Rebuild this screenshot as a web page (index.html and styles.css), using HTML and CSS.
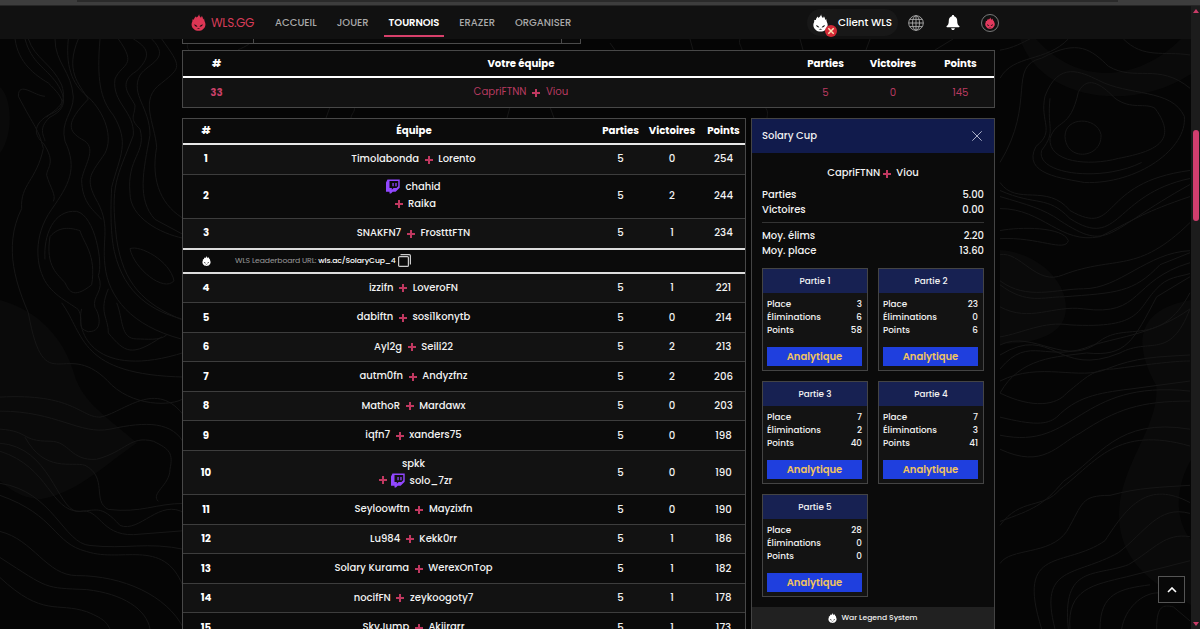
FILE: index.html
```
<!DOCTYPE html>
<html lang="fr">
<head>
    <meta charset="UTF-8">
    <meta name="viewport" content="width=device-width, initial-scale=1.0">
    <title>WLS.GG - Solary Cup</title>
    <link rel="stylesheet" href="styles.css">
</head>
<body>
    <svg width="0" height="0" class="sprite">
        <symbol id="wls" viewBox="0 0 24 28">
            <path fill-rule="evenodd" d="M13 0c0 2.500 1.200 4.200 3 6 .8-.8 1.200-1.800 1.400-3 1.500 2 2 4 2.100 6 .7-.4 1.200-1 1.600-1.800.4 2 .4 3.600 1.100 5.100C24.600 17 23.500 22 19.300 25.200 16.500 28.600 7.500 28.600 4.700 25.200.5 22-.6 17 1.800 12.300c.3-1.300.3-2.200 0-3.600.9.500 1.800.6 2.700.3C5 6.700 6 5 8 3.500c0 1 .1 1.700.6 2.400C10.500 4.600 12.300 2.800 13 0zM5 17c.2 2.700 2 4.200 5.200 4C9.500 19 7.500 17.700 5 17zm14 0c-2.500.7-4.500 2-5.200 4 3.200.2 5-1.300 5.200-4zM9 23.800l3 1 3-1-3-.5z"/>
        </symbol>
        <symbol id="twitch" viewBox="0 0 24 24">
            <path fill-rule="evenodd" d="M2.500 0h21v14l-7 7h-5l-3 3H6v-3H0V5zM6 2.500v12h4v3l3-3h5l3-3v-9zM11 6h2.200v5.500H11zm5 0h2.200v5.500H16z"/>
        </symbol>
    </svg>

    <svg class="topo" viewBox="0 0 1200 629">
        <g class="shade">
            <path d="M0 300c30 8 60 30 73 70 8 30 25 40 64 73-30 20-60 50-95 56-20 0-32-10-42-18z"/>
            <path d="M0 87c12 10 14 48 0 66z"/>
            <path d="M1000 250c34 2 66 28 66 58 0 26-30 36-66 36z"/>
            <path d="M1020 39c20 60 110 75 171 35v-35h-10c-40 40-100 50-145 0z"/>
            <path d="M1191 300c-60 10-55 50-35 85 5 40-37 80-37 130 0 60 60 80 72 90v-65c-20-25-12-60 0-80z"/>
        </g>
        <g class="lines" transform="scale(.3333 .4011)">
            <path d="M45 97c10 60 60 90 100 110 50 40 60 60 0 80-60 30-30 60-15 70 40 50 10 60 10 80 10 30 30 50 20 65"/>
            <path d="M75 97c20 60 60 70 95 110 40 50 15 70-20 85-40 30-15 50-15 60"/>
            <path d="M85 97c20 50 70 60 100 115 20 50-20 60-45 80"/>
            <path d="M165 97c0 60 50 80 55 145 0 40-40 60-25 110 40 70 10 110-40 170-60 70-40 140-30 160 20 50 80 70 110 90 20 30-10 45 30 55 50 0 30-50 20-60-10-30 30-40 10-80 15-30-10-150-65-160-70-5-100 60-95 120"/>
            <path d="M205 97c-10 80 20 120 60 145 50 40 75 100 50 140-40 50-60 60-30 110 50 70 20 100 30 170 10 80 80 150 228 183"/>
            <path d="M235 97c-40 80 0 110 30 150-70 60-60 80-20 100 50 20 10 60 0 100 0 60 40 80 60 100"/>
            <path d="M300 97c-10 100 0 150 40 190 50 70 20 100-5 180-5 80 0 130 8 160 30 110 120 150 202 168"/>
            <path d="M355 97c60 70 10 60-10 100-10 60 60 80 55 140-50 110-70 120-50 260 20 110 80 160 195 200"/>
            <path d="M400 97c40 20 60 40 10 80-60 30-20 60-5 85 0 30-20 30 15 60 20 60-40 70-30 160 0 60 90 100 160 112"/>
            <path d="M455 97c60 50-10 60-35 90-30 50 30 80 30 150-20 90-40 160 15 210l90 40M485 97c60 70 60 70 0 110-70 40-20 100-15 160-20 90 20 150 85 180"/>
            <path d="M150 590c30-30 70-20 90-15 10 30 50 60 35 135-60 40-70 10-80-5-20-20-60-40-45-115z"/>
            <path d="M390 620c30-10 120 30 132 80-30 30-120-30-132-80z"/>
            <path d="M325 720c-30 60 0 70 0 110 50 50 70 60 160 10M350 755c20 40 10 90 60 90 30 0 70 5 90-10"/>
            <path d="M245 770c-20 60 40 180 310 108"/>
            <path d="M185 755c70 80 50 180 370 185"/>
            <path d="M55 240c0-40 50 0 80 0M55 240c50 80 60 80 75 130-20 80-70 90-65 150-60 100-10 200 20 260 50 230 110 50 250 180 80 60 200 50 220 30"/>
            <path d="M0 990c220-10 240 50 300 50 70-10 170-100 255 0"/>
            <path d="M0 1025c170 0 240 60 330 45 110-20 190-20 225 40"/>
            <path d="M0 1070c90 5 60 30 150 30 60 0 60 50 140 45 90-20 100-60 170-45 50 20 60 30 50 70 0 40-60 60-35 80"/>
            <path d="M75 1090c60 90 140 60 180 70 70 30 20 90 70 110 100 10 140-15 230-15"/>
            <path d="M0 1105c150 10 170 160 230 170 60 0 70-20 130 35 60 20 120-70 195-30"/>
            <path d="M0 1125c150 40 150 150 240 150 60-10 60 60 160 58l155-10"/>
            <path d="M0 1205c160 20 190 150 270 155 110 10 170-10 285 10"/>
            <path d="M0 1235c170 50 160 120 260 140 110 30 240-40 295 100"/>
            <path d="M0 1325c100 20 140 110 230 110 140 0 270 50 320 130"/>
            <path d="M0 1390c150 80 130 75 260 80 110 10 180 50 190 98"/>
            <path d="M0 1440c130 100 170 60 260 85 60 20 60 30 70 43"/>
        </g>
        <g class="lines" transform="translate(1000) scale(.3333 .4011)">
            <path d="M0 195c40-60 140-40 205-98M0 125c40-5 70-20 90-28M370 97c60 50 120 30 200 40"/>
            <path d="M0 405c110-150 20-240 125-260 110-50 150-20 200 20 80 40 150-10 245 55"/>
            <path d="M135 240c40-90 110-60 160-40 90 40 220 20 258 90 10 80-140 170-300 165-60-10-190-20-145-90 60-40 10-60 27-125z"/>
            <path d="M235 230c30-50 80-10 110 15 50 30 90 10 120 25 80 90-20 110-110 125-90 20-210 10-205-50 20-50 60-20 85-115z"/>
            <path d="M195 340c0-50 95-50 108-5 5 60-105 70-108 5zM150 245c-10 80 20 80-25 130-20 60 180 80 300 30"/>
            <path d="M0 455c50 60 140 0 210 70 150 70 80-70 360-100"/>
            <path d="M0 475c110 40 140 10 210 70 150 80 130-60 360-100"/>
            <path d="M0 490c80 20 130 30 180 60 150 80 130 30 390-90"/>
            <path d="M0 520c130 0 180 90 300 70 120-50 130-60 270-100"/>
            <path d="M0 575c60-10 190-10 205 25-10 30-90-10-205-5"/>
            <path d="M0 635c60-10 110 80 190 50 160-50 220 0 380-130"/>
            <path d="M0 700c80 50 170 20 250 20 110 0 190-90 320-95"/>
            <path d="M0 710c80 50 130 30 190 30 160-10 210-10 290-80l90-30"/>
            <path d="M0 765c90 40 160-5 250 5 180 20 140-70 320-115"/>
            <path d="M0 840c70-10 130-40 210-30 220 10 200-40 260-90 30-30 70-30 100-38"/>
            <path d="M0 860c100-40 200 60 300-10 80-50 180 20 270-120"/>
            <path d="M0 920c90-90 140-10 280-60 80-20 190-30 290-90"/>
            <path d="M0 885c160-80 170 60 360-5 90-40 150 20 210-110"/>
            <path d="M0 980c60-90 170-90 260-100 120 10 140-30 210-140l100-50"/>
            <path d="M0 950c120-50 240 0 320-30 90-30 150-30 250-35"/>
            <path d="M0 980c100 40 170 30 200 0 60-40 80-60 140-60 90-10 180-20 230-20"/>
            <path d="M0 1040c100 20 140 20 170 0 60-50 120-60 220-70l180-20"/>
            <path d="M0 1085c230 40 230-140 570-110"/>
            <path d="M0 1120c130 50 170-10 240-40 110-60 180-80 330-80"/>
            <path d="M0 1310c60-70 130-40 180-90 110-70 170-160 390-108"/>
            <path d="M0 1300c100-30 130-40 190-100 110-60 160-160 380-130"/>
            <path d="M0 1405c30-40 150-20 200-80 50-70 40-90 130-90 90-20 150-20 240-25"/>
            <path d="M125 1568c-80-210 70-150 190-220 70-90 130-150 255-95"/>
            <path d="M165 1568c-50-160 60-130 190-190 80-50 120-120 215-98"/>
            <path d="M205 1568c-20-160 80-130 180-160 80-40 110-80 185-70"/>
            <path d="M210 1568c-10-100 70-110 170-130l190-40M300 1568c0-90 60-100 150-110M365 1568c10-50 60-90 110-90M470 1568c0-60 20-60 50-55l50 35"/>
        </g>
        <g class="lines">
            <path d="M185 39c5 4 0 7 4 11M250 43c-4 4-9 5-12 7M330 107l-4 11M354 107c2 4-3 7-3 11M510 107l-3 11M550 107l4 11M610 43l5 7M690 39l3 11M740 39c-2 5 2 8 2 11M765 107c4 5 2 8 2 11M800 39l3 11M870 39l-4 11M935 50l18-11"/>
        </g>
    </svg>

    <div class="browser-edge"><span></span></div>

    <div class="screen">
        <div class="page">
            <nav class="navbar">
                <a class="brand"><svg><use href="#wls"/></svg><span>WLS.GG</span></a>
                <ul class="menu">
                    <li>ACCUEIL</li>
                    <li>JOUER</li>
                    <li class="active">TOURNOIS</li>
                    <li>ERAZER</li>
                    <li>ORGANISER</li>
                </ul>
                <div class="client">
                    <svg class="client-logo"><use href="#wls"/></svg>
                    <svg class="client-badge" viewBox="0 0 12 12"><circle cx="6" cy="6" r="6" fill="#d32936"/><path d="M3.300 3.300l5.400 5.400M8.700 3.300L3.300 8.700" stroke="#fbe3b5" stroke-width="1.500"/></svg>
                    <span>Client WLS</span>
                </div>
                <svg class="globe" viewBox="0 0 16 16"><circle cx="8" cy="8" r="7.300"/><ellipse cx="8" cy="8" rx="3.500" ry="7.300"/><path d="M8 .7v14.600M.7 8h14.600M1.700 4.400h12.600M1.700 11.600h12.600"/></svg>
                <svg class="bell" viewBox="0 0 14 16"><path d="M7 0c.8 0 1.200.6 1.200 1.300C10.600 1.900 11.500 4 11.500 6c0 3.500.8 4.600 2.200 5.800.6.600.2 1.200-.5 1.200H.8c-.7 0-1.100-.6-.5-1.200C1.700 10.600 2.500 9.500 2.500 6c0-2 .9-4.100 3.300-4.700C5.800.6 6.200 0 7 0zM5 14h4c-.2 2.500-3.800 2.500-4 0z"/></svg>
                <div class="avatar"><svg><use href="#wls"/></svg></div>
            </nav>

            <div class="content">
                <div class="search-row"><span></span><span></span><span></span></div>

                <div class="board my-team">
                    <div class="row head"><b>#</b><b>Votre équipe</b><b>Parties</b><b>Victoires</b><b>Points</b></div>
                    <div class="row"><b>33</b><div class="team">CapriFTNN <i></i> Viou</div><span>5</span><span>0</span><span>145</span></div>
                </div>

                <div class="columns">
                    <div class="board ranking">
                        <div class="row head"><b>#</b><b>Équipe</b><b>Parties</b><b>Victoires</b><b>Points</b></div>
                        <div class="row"><b>1</b><div class="team">Timolabonda <i></i> Lorento</div><span>5</span><span>0</span><span>254</span></div>
                        <div class="row tall"><b>2</b><div class="team"><p><svg class="twitch"><use href="#twitch"/></svg>chahid</p><p><i></i> Raika</p></div><span>5</span><span>2</span><span>244</span></div>
                        <div class="row last"><b>3</b><div class="team">SNAKFN7 <i></i> FrostttFTN</div><span>5</span><span>1</span><span>234</span></div>
                        <div class="row url">
                            <b><svg class="mini-logo"><use href="#wls"/></svg></b>
                            <div class="link">WLS Leaderboard URL: <em>wls.ac/SolaryCup_4</em><svg class="copy" viewBox="0 0 13 13"><rect x=".6" y="2.600" width="9.800" height="9.800" rx="1"/><path d="M2.500.6h8.700q1.200 0 1.200 1.200v8.700"/></svg></div>
                        </div>
                        <div class="row"><b>4</b><div class="team">izzifn <i></i> LoveroFN</div><span>5</span><span>1</span><span>221</span></div>
                        <div class="row"><b>5</b><div class="team">dabiftn <i></i> sosi1konytb</div><span>5</span><span>0</span><span>214</span></div>
                        <div class="row"><b>6</b><div class="team">Ayl2g <i></i> Seili22</div><span>5</span><span>2</span><span>213</span></div>
                        <div class="row"><b>7</b><div class="team">autm0fn <i></i> Andyzfnz</div><span>5</span><span>2</span><span>206</span></div>
                        <div class="row"><b>8</b><div class="team">MathoR <i></i> Mardawx</div><span>5</span><span>0</span><span>203</span></div>
                        <div class="row"><b>9</b><div class="team">iqfn7 <i></i> xanders75</div><span>5</span><span>0</span><span>198</span></div>
                        <div class="row tall"><b>10</b><div class="team"><p>spkk</p><p><i class="tight"></i><svg class="twitch"><use href="#twitch"/></svg>solo_7zr</p></div><span>5</span><span>0</span><span>190</span></div>
                        <div class="row"><b>11</b><div class="team">Seyloowftn <i></i> Mayzixfn</div><span>5</span><span>0</span><span>190</span></div>
                        <div class="row"><b>12</b><div class="team">Lu984 <i></i> Kekk0rr</div><span>5</span><span>1</span><span>186</span></div>
                        <div class="row"><b>13</b><div class="team">Solary Kurama <i></i> WerexOnTop</div><span>5</span><span>1</span><span>182</span></div>
                        <div class="row"><b>14</b><div class="team">nocifFN <i></i> zeykoogoty7</div><span>5</span><span>1</span><span>178</span></div>
                        <div class="row"><b>15</b><div class="team">SkyJump <i></i> Akiirarr</div><span>5</span><span>1</span><span>173</span></div>
                    </div>

                    <aside class="details">
                        <header>Solary Cup <svg viewBox="0 0 10 10"><path d="M.3.3l9.400 9.400M9.700.3L.3 9.700"/></svg></header>
                        <div class="details-body">
                            <div class="players">CapriFTNN <i class="near"></i> Viou</div>
                            <dl class="stats">
                                <div><dt>Parties</dt><dd>5.00</dd></div>
                                <div><dt>Victoires</dt><dd>0.00</dd></div>
                            </dl>
                            <dl class="stats average">
                                <div><dt>Moy. élims</dt><dd>2.20</dd></div>
                                <div><dt>Moy. place</dt><dd>13.60</dd></div>
                            </dl>
                            <div class="games">
                                <div class="game">
                                    <h4>Partie 1</h4>
                                    <dl><div><dt>Place</dt><dd>3</dd></div><div><dt>Éliminations</dt><dd>6</dd></div><div><dt>Points</dt><dd>58</dd></div></dl>
                                    <button>Analytique</button>
                                </div>
                                <div class="game">
                                    <h4>Partie 2</h4>
                                    <dl><div><dt>Place</dt><dd>23</dd></div><div><dt>Éliminations</dt><dd>0</dd></div><div><dt>Points</dt><dd>6</dd></div></dl>
                                    <button>Analytique</button>
                                </div>
                                <div class="game">
                                    <h4>Partie 3</h4>
                                    <dl><div><dt>Place</dt><dd>7</dd></div><div><dt>Éliminations</dt><dd>2</dd></div><div><dt>Points</dt><dd>40</dd></div></dl>
                                    <button>Analytique</button>
                                </div>
                                <div class="game">
                                    <h4>Partie 4</h4>
                                    <dl><div><dt>Place</dt><dd>7</dd></div><div><dt>Éliminations</dt><dd>3</dd></div><div><dt>Points</dt><dd>41</dd></div></dl>
                                    <button>Analytique</button>
                                </div>
                                <div class="game">
                                    <h4>Partie 5</h4>
                                    <dl><div><dt>Place</dt><dd>28</dd></div><div><dt>Éliminations</dt><dd>0</dd></div><div><dt>Points</dt><dd>0</dd></div></dl>
                                    <button>Analytique</button>
                                </div>
                            </div>
                        </div>
                        <footer><svg class="mini-logo"><use href="#wls"/></svg>War Legend System</footer>
                    </aside>
                </div>
            </div>
        </div>

        <div class="scrollbar">
            <svg viewBox="0 0 6 4"><path d="M3 0l3 4H0z"/></svg>
            <span class="thumb"></span>
            <svg viewBox="0 0 6 4"><path d="M3 4l3-4H0z"/></svg>
        </div>
    </div>

    <button class="to-top"><svg viewBox="0 0 10 6"><path d="M1 5l4-4 4 4"/></svg></button>
</body>
</html>
```

FILE: styles.css
```
* {
    box-sizing: border-box;
}

body {
    margin: 0;
    height: 629px;
    overflow: hidden;
    position: relative;
    background-color: #050505;
    color: #f2f2f2;
    font-family: "Poppins", Inter, "Open Sans", sans-serif;
    font-size: 10.2px;
}

p, dl, dd, h4, ul {
    margin: 0;
    padding: 0;
}

.sprite {
    position: absolute;
}

.topo {
    position: absolute;
    top: 0;
    left: 0;
    width: 1200px;
    height: 629px;
    z-index: -1;
}

.lines path {
    fill: none;
    stroke: #161616;
    stroke-width: 1;
    vector-effect: non-scaling-stroke;
}

.shade {
    fill: #0a0a0a;
}

.browser-edge {
    height: 6px;
    background-color: #3d3d3d;
    border-bottom: 1px solid #262626;
}

.browser-edge span {
    display: block;
    height: 2px;
    margin: 0 82px 0 77px;
    background-color: #2a2a2a;
}

.screen {
    display: flex;
    height: 623px;
}

.page {
    flex: 1;
    overflow: hidden;
}

/* navbar */
.navbar {
    display: flex;
    align-items: center;
    height: 33px;
    padding-left: 191px;
    background-color: #111;
}

.brand {
    display: flex;
    align-items: center;
    width: 84px;
    color: #d63c58;
    font-size: 12px;
    letter-spacing: -0.35px;
}

.brand svg {
    width: 15px;
    height: 17px;
    margin-right: 5px;
    fill: #dc3654;
}

.menu {
    display: flex;
    gap: 20px;
    width: 532px;
    list-style: none;
    color: #aaa;
    font-size: 10px;
    font-weight: 500;
    line-height: 29px;
}

.menu li {
    height: 29px;
}

.menu .active {
    margin: 0 -5px;
    padding: 0 5px;
    color: #fff;
    font-weight: 600;
    letter-spacing: -0.05px;
    border-bottom: 2px solid #d8406b;
}

.client {
    position: relative;
    display: flex;
    align-items: center;
    width: 91px;
    height: 27px;
    padding-left: 6px;
    border-radius: 14px;
    background-color: #181818;
    color: #fff;
    font-size: 10.3px;
    font-weight: 500;
}

.client span {
    white-space: nowrap;
}

.client-logo {
    width: 15px;
    height: 18px;
    margin-right: 10px;
    fill: #fff;
}

.client-badge {
    position: absolute;
    left: 18px;
    top: 16px;
    width: 12px;
    height: 12px;
}

.globe {
    width: 16px;
    height: 16px;
    margin-left: 10px;
    fill: none;
    stroke: #aaa;
    stroke-width: 0.9;
}

.bell {
    width: 14px;
    height: 15px;
    margin-left: 22px;
    fill: #fff;
}

.avatar {
    display: flex;
    align-items: center;
    justify-content: center;
    width: 18px;
    height: 18px;
    margin-left: 21px;
    border: 1px solid #777;
    border-radius: 50%;
}

.avatar svg {
    width: 10px;
    height: 12px;
    fill: #e23a5e;
}

/* content */
.content {
    width: 813px;
    margin-left: 182px;
}

.search-row {
    display: flex;
    width: 399px;
    height: 5px;
    border: 1px solid #4a4a4a;
    border-top: 0;
    background-color: #080808;
}

.search-row span:nth-child(1) {
    width: 71px;
    border-right: 1px solid #4a4a4a;
}

.search-row span:nth-child(2) {
    width: 308px;
    border-right: 1px solid #4a4a4a;
}

.board {
    border: 1px solid #484848;
    text-align: center;
}

.row {
    display: grid;
    grid-template-columns: 46px 1fr 43px 60px 43px;
    align-items: center;
    height: 29.5px;
    border-bottom: 1px solid #3d3d3d;
    background-color: #0b0b0b;
}

.row:nth-child(even) {
    background-color: #121212;
}

.row b {
    color: #fff;
}

.row.head {
    height: 26px;
    border-bottom: 2px solid #e8e8e8;
    white-space: nowrap;
}

.my-team {
    margin-top: 6px;
}

.my-team .row {
    grid-template-columns: 67px 1fr 67px 68px 67px;
    height: 29px;
    border-bottom: 0;
    color: #b83a60;
}

.my-team .row.head {
    height: 27px;
    border-bottom: 2px solid #fff;
}

.my-team .row:last-child b {
    color: #c84068;
}

.columns {
    display: flex;
    gap: 5px;
    margin-top: 10px;
}

.ranking {
    width: 564px;
}

.ranking .row span {
    font-weight: 500;
}

.team {
    padding-bottom: 1.5px;
    line-height: 17px;
    white-space: nowrap;
}

.ranking .team {
    padding-right: 1px;
    font-size: 10px;
    font-weight: 500;
}

.team p {
    display: flex;
    align-items: center;
    justify-content: center;
}

.team p:last-child {
    padding-left: 4px;
}

i {
    display: inline-block;
    width: 8px;
    height: 8px;
    margin: 0 3px;
    vertical-align: -1.5px;
    background: linear-gradient(#c03860, #c03860) center / 8px 2px no-repeat,
        linear-gradient(#c03860, #c03860) center / 2px 8px no-repeat;
}

.team p i {
    margin: 0 5px 0 0;
}

.team p .tight {
    margin-right: 4px;
}

.twitch {
    width: 14px;
    height: 15px;
    margin-right: 5px;
    fill: #9147ff;
}

.row.tall {
    height: 44.4px;
}

.row.last {
    height: 31px;
    border-bottom: 2px solid #ddd;
}

.row.url {
    grid-template-columns: 46px 1fr;
    height: 24px;
    border-bottom: 2px solid #ddd;
    text-align: left;
}

.url b {
    display: flex;
    justify-content: center;
}

.mini-logo {
    width: 9px;
    height: 10px;
    fill: #fff;
}

.link {
    display: flex;
    align-items: center;
    padding-left: 6px;
    color: #999;
    font-size: 7.7px;
    white-space: pre;
    letter-spacing: -0.12px;
}

.link em {
    color: #fff;
    font-style: normal;
    font-weight: 500;
}

.copy {
    width: 13px;
    height: 13px;
    margin-left: 2px;
    fill: none;
    stroke: #ccc;
    stroke-width: 1.2;
}

/* team details */
.details {
    width: 244px;
    height: 520px;
    border: 1px solid #444;
    background-color: #0b0b0b;
    font-size: 10px;
    font-weight: 500;
}

.details header {
    display: flex;
    align-items: center;
    justify-content: space-between;
    height: 34px;
    padding: 0 12px 0 10px;
    background-color: #111b4c;
}

.details header svg {
    width: 10px;
    height: 10px;
    fill: none;
    stroke: #aab0c8;
}

.details-body {
    height: 454px;
    padding: 11px 10px 0;
}

.players {
    height: 23px;
    text-align: center;
    line-height: 17px;
}

.players .near {
    margin: 0 3px 0 0;
}

.stats div,
.game dl div {
    display: flex;
    justify-content: space-between;
}

.stats {
    line-height: 15px;
}

.average {
    margin-top: 5px;
    padding-top: 5px;
    border-top: 1px solid #333;
}

.games {
    display: grid;
    grid-template-columns: 106px 106px;
    gap: 10px;
    margin-top: 10px;
}

.game {
    height: 103px;
    border: 1px solid #444;
    background-color: #131313;
}

.game h4 {
    height: 24px;
    background-color: #172152;
    font-size: 8.8px;
    font-weight: 500;
    line-height: 24px;
    text-align: center;
}

.game dl {
    padding: 5px 5px 0 4px;
    font-size: 8.8px;
    line-height: 13.2px;
}

.game button {
    display: block;
    width: 95px;
    height: 19px;
    margin: 9px 0 0 4px;
    padding: 0;
    border: 0;
    background-color: #1f3fde;
    color: #f0c460;
    font-family: inherit;
    font-size: 10px;
    font-weight: 600;
    line-height: 20px;
}

.details footer {
    display: flex;
    align-items: center;
    justify-content: center;
    height: 22px;
    background-color: #212121;
    font-size: 7.6px;
}

.details footer svg {
    margin-right: 4px;
}

/* scrollbar */
.scrollbar {
    display: flex;
    flex-direction: column;
    align-items: center;
    width: 9px;
    padding: 3px 0;
    background-color: #1c1c1c;
}

.scrollbar svg {
    width: 6px;
    height: 4px;
    fill: #c93c68;
}

.scrollbar .thumb {
    width: 6px;
    height: 91px;
    margin: 117px 0 auto;
    border-radius: 3px;
    background-color: #d03e6e;
}

.to-top {
    position: absolute;
    right: 15px;
    bottom: 26px;
    display: flex;
    align-items: center;
    justify-content: center;
    width: 27px;
    height: 27px;
    padding: 0;
    border: 1px solid #555;
    background-color: #080808;
}

.to-top svg {
    width: 10px;
    height: 6px;
    fill: none;
    stroke: #fff;
    stroke-width: 1.6;
}
```
